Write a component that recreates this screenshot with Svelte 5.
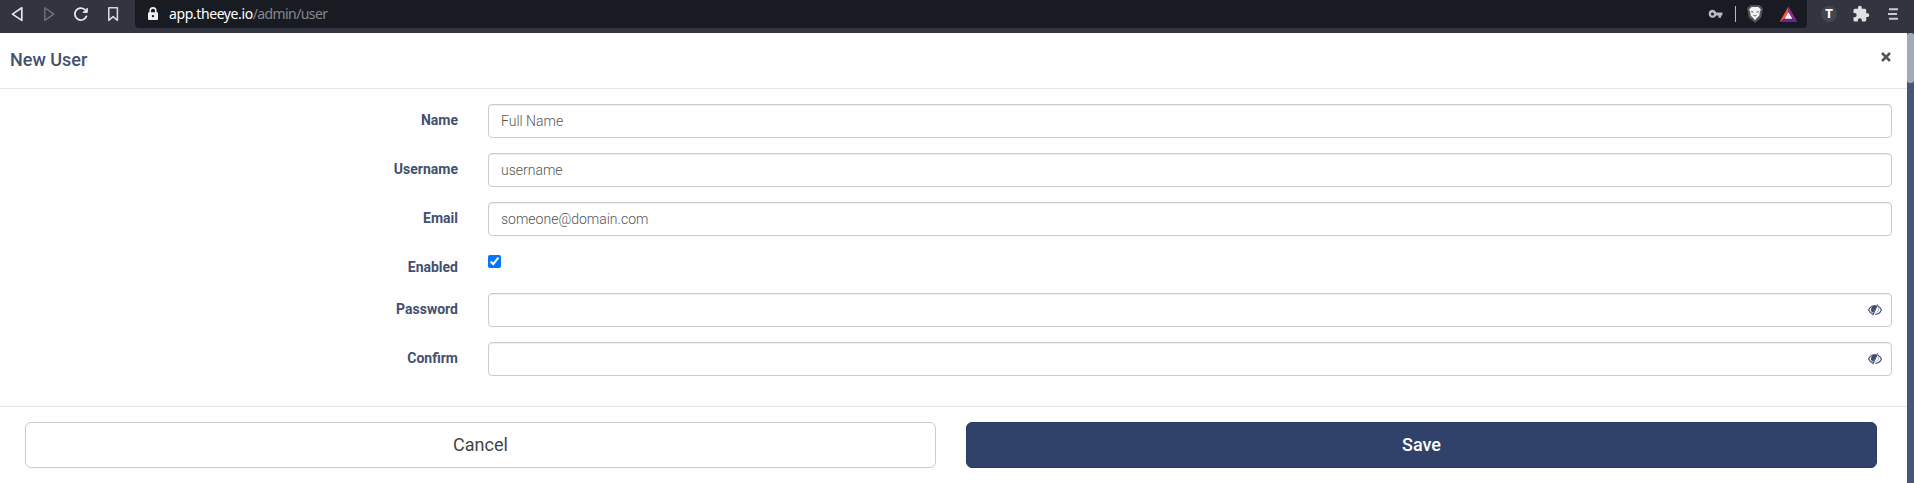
<script>
  const fields = [
    { label: 'Name', type: 'text', placeholder: 'Full Name' },
    { label: 'Username', type: 'text', placeholder: 'username' },
    { label: 'Email', type: 'text', placeholder: 'someone@domain.com' },
    { label: 'Enabled', type: 'checkbox' },
    { label: 'Password', type: 'password' },
    { label: 'Confirm', type: 'password' }
  ];
</script>

<div class="window">
  <header class="toolbar">
    <nav class="nav">
      <svg width="22" height="28" viewBox="0 0 22 28"><path d="M15.8 7.8v12.6L6.5 14.1z" fill="none" stroke="#e6e7ea" stroke-width="1.7" stroke-linejoin="round" /></svg>
      <svg width="22" height="28" viewBox="0 0 22 28"><path d="M6.8 7.8v12.6l9-6.3z" fill="none" stroke="#70737c" stroke-width="1.4" stroke-linejoin="round" /></svg>
      <svg width="22" height="28" viewBox="0 0 22 28"><path d="M14.6 9.4A6 6 0 1 0 16.4 16.4" fill="none" stroke="#e6e7ea" stroke-width="1.8" stroke-linecap="round" /><path d="M17.3 8.2v4.2h-4.2z" fill="#e6e7ea" stroke="#e6e7ea" stroke-linejoin="round" /></svg>
      <svg width="22" height="28" viewBox="0 0 22 28"><path d="M6.8 7.7h8.6v12.6l-4.3-3.7-4.3 3.7z" fill="none" stroke="#d5d7db" stroke-width="1.6" stroke-linejoin="round" /></svg>
    </nav>
    <div class="address">
      <svg class="lock" width="12" height="14" viewBox="0 0 12 14"><path d="M3.2 6V3.7a2.8 2.8 0 0 1 5.6 0V6" fill="none" stroke="#eef0f2" stroke-width="1.6" /><rect x="1" y="5.3" width="10" height="7.7" rx="1" fill="#eef0f2" /><circle cx="6" cy="9.1" r="1.2" fill="#181b22" /></svg>
      <span class="url"><b>app.theeye.io</b>/admin/user</span>
      <svg class="key" width="15" height="12" viewBox="0 0 15 12"><path fill="#b7babf" fill-rule="evenodd" d="M4.5 1.8a4 4 0 0 1 3.8 2.7H14.4v3h-1.3v2.3h-2.7V7.5H8.3A4 4 0 1 1 4.5 1.8zm0 2.6a1.5 1.5 0 1 0 0 3 1.5 1.5 0 0 0 0-3z" /></svg>
      <i class="divider"></i>
      <svg class="lion" width="18" height="20" viewBox="0 0 18 20"><path d="M4.5 1h9L17 4.3l-1.8 9.2L9 19l-6.2-5.5L1 4.3z" fill="#50535b" /><path d="M5.5 3h7l2.4 2.5-1.1 2.4-.5 3.8-2.5 2.2L9 16.2 7.2 13.9l-2.5-2.2-.5-3.8-1.1-2.4z" fill="#f3f3f4" /><path d="M5.2 7.6l2.3.6M12.8 7.6l-2.3.6M7.4 11.3L9 12l1.6-.7" fill="none" stroke="#565962" stroke-width="1" /></svg>
      <svg class="triangle" width="19" height="17" viewBox="0 0 19 17"><path d="M9.5.5L.5 16 9.5 10z" fill="#ff5436" /><path d="M9.5.5l9 15.5-9-6z" fill="#8d2592" /><path d="M.5 16h18L9.5 10z" fill="#682394" /><path d="M9.5 6.2l3.8 6.6H5.7z" fill="#fff" /></svg>
    </div>
    <div class="extensions">
      <span class="badge">T</span>
      <svg class="puzzle" width="18" height="18" viewBox="0 0 24 24"><path fill="#dfe1e4" d="M20.5 11H19V7a2 2 0 0 0-2-2h-4V3.5a2.5 2.5 0 0 0-5 0V5H4a2 2 0 0 0-2 2v3.8h1.5a2.7 2.7 0 0 1 0 5.4H2V20a2 2 0 0 0 2 2h3.8v-1.5a2.7 2.7 0 0 1 5.4 0V22H17a2 2 0 0 0 2-2v-4h1.5a2.5 2.5 0 0 0 0-5z" /></svg>
      <svg width="12" height="14" viewBox="0 0 12 14"><path d="M2 2.2h9M1 7h9M2 11.8h9" stroke="#c9cbd0" stroke-width="1.9" /></svg>
    </div>
  </header>

  <div class="page">
    <main class="modal">
      <div class="heading">
        <h1>New User</h1>
        <button class="close" aria-label="Close"><svg width="12" height="12" viewBox="0 0 12 12"><path d="M2 2l8 8M10 2l-8 8" stroke="#555" stroke-width="2.5" /></svg></button>
      </div>
      <form>
        {#each fields as field, i}
          <div class="row" class:check={field.type === 'checkbox'}>
            <label for="field-{i}">{field.label}</label>
            {#if field.type === 'checkbox'}
              <input id="field-{i}" class="checkbox" type="checkbox" checked />
            {:else}
              <div class="control">
                <input id="field-{i}" type={field.type} placeholder={field.placeholder} />
                {#if field.type === 'password'}
                  <svg class="eye" width="14" height="12" viewBox="0 0 14 12"><path d="M7.8 1.9C4.5 1.3 1.8 3.2.6 6c.9 1.9 2.3 3.3 4.1 3.9M9.8 2.3c1.6.7 2.9 2 3.6 3.7-1.1 2.7-3.4 4.2-6.3 4.3" fill="none" stroke="#3e4c70" stroke-width="1.1" /><path d="M8.6 2.2a3.7 3.7 0 0 0-3.6 6.6z" fill="#3e4c70" /><path d="M9.6.5L4.7 11.3" fill="none" stroke="#3e4c70" stroke-width="1.2" /><path d="M10.3 4.3c.5 1.9-.2 3.4-1.8 4.3" fill="none" stroke="#7e89a5" stroke-width=".8" /></svg>
                {/if}
              </div>
            {/if}
          </div>
        {/each}
      </form>
      <footer>
        <button class="cancel">Cancel</button>
        <button class="save">Save</button>
      </footer>
    </main>
    <div class="scrollbar"><i></i></div>
  </div>
</div>

<style>
  :global(body) { margin: 0; overflow: hidden; }
  * { box-sizing: border-box; }
  .window { height: 483px; display: flex; flex-direction: column; font-family: Roboto, sans-serif; background: #fefefe; }
  .toolbar { height: 33px; flex: none; display: flex; align-items: flex-start; background: #32353f; }
  .nav { width: 135px; height: 28px; display: flex; gap: 10px; padding-left: 6px; }
  svg { display: block; flex: none; }
  .address { width: 1672px; height: 28px; display: flex; align-items: center; padding-left: 12px; background: #181b22; border-radius: 0 0 4px 4px; }
  .url { margin-left: 10px; flex: 1; font: 14px/28px "Noto Sans", sans-serif; letter-spacing: -.6px; color: #858890; }
  .url b { color: #fff; font-weight: 400; letter-spacing: -.4px; }
  .divider { width: 1px; height: 16px; margin: 0 10px 0 12px; background: #b7babf; }
  .triangle { margin: 0 9px 0 15px; }
  .extensions { flex: 1; height: 28px; display: flex; align-items: center; padding-left: 14px; }
  .badge { width: 16px; height: 16px; border-radius: 50%; background: #43464f; color: #fff; font: 900 12px/16px Roboto, sans-serif; text-align: center; }
  .puzzle { margin: 0 17px 0 15px; }
  .page { flex: 1; display: flex; }
  .modal { width: 1907px; display: flex; flex-direction: column; }
  .heading { height: 56px; display: flex; justify-content: space-between; border-bottom: 1px solid #e5e5e5; padding: 15px 15px 0 10px; }
  h1 { margin: 0; font-size: 18px; line-height: 24px; font-weight: 500; color: #43506f; }
  .close { width: 12px; height: 18px; padding: 0; border: 0; background: none; }
  form { height: 317px; padding: 15px 15px 0 0; }
  .row { display: flex; height: 34px; margin-bottom: 15px; }
  .row.check { height: 27px; }
  label { width: 458px; margin-right: 30px; padding-top: 6px; text-align: right; font-size: 14px; line-height: 20px; font-weight: 700; color: #43506f; }
  .control { flex: 1; position: relative; }
  .control input { width: 100%; height: 34px; padding: 6px 12px; border: 1px solid #ccc; border-radius: 4px; background: #fff; box-shadow: inset 0 1px 1px rgba(0, 0, 0, .075); font: 300 14px/20px Roboto, sans-serif; outline: none; }
  .control input::placeholder { color: #555; opacity: 1; }
  .checkbox { width: 13px; height: 13px; margin: 4px 0 0; accent-color: #0075ff; }
  .eye { position: absolute; right: 10px; top: 11px; }
  footer { flex: 1; display: flex; gap: 30px; padding: 15px 30px 0 25px; border-top: 1px solid #e5e5e5; }
  footer button { flex: 1; height: 46px; padding: 0; border-radius: 6px; font: 400 18px/24px Roboto, sans-serif; }
  .cancel { border: 1px solid #ccc; background: #fff; color: #444; }
  .save { border: 1px solid #2b3b60; background: #304269; color: #fff; }
  footer .save { font-weight: 500; }
  .scrollbar { flex: 1; background: #465678; }
  .scrollbar i { display: block; height: 50px; border-radius: 3px; background: #a1abba; }
</style>
